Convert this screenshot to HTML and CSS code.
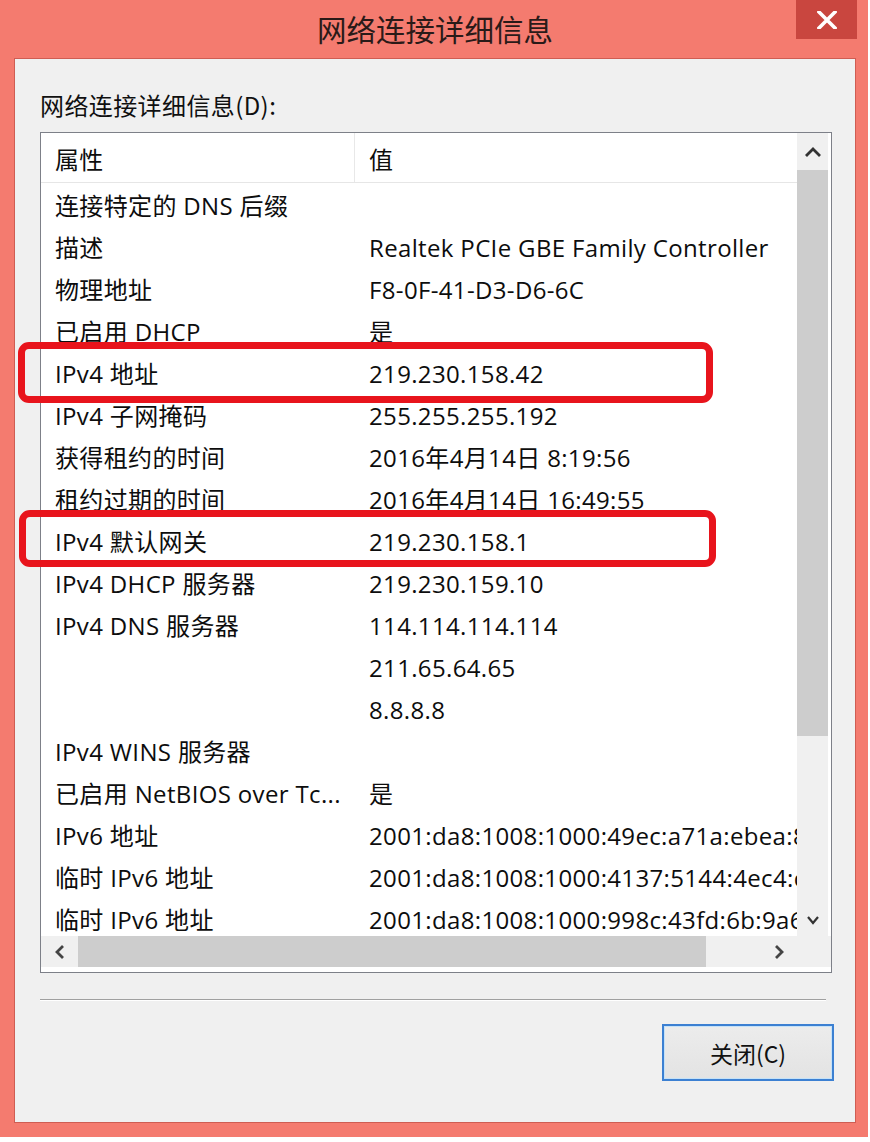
FILE: index.html
```html
<!DOCTYPE html>
<html lang="zh-CN">
<head>
<meta charset="utf-8">
<title>网络连接详细信息</title>
<link rel="stylesheet" href="styles.css">
</head>
<body>
<div class="window">
  <div class="titlebar">
    <div class="title">网络连接详细信息</div>
    <div class="close">
      <svg width="20" height="18" viewBox="0 0 20 18"><path d="M2 1 L18 17 M18 1 L2 17" stroke="#fff" stroke-width="3.6" stroke-linecap="square" fill="none"/></svg>
    </div>
  </div>
  <div class="panel">
    <div class="label">网络连接详细信息(D):</div>
    <div class="listbox">
      <div class="content">
        <div class="row head"><div class="c1">属性</div><div class="c2">值</div></div>
        <div class="rows">
          <div class="row"><div class="c1">连接特定的 DNS 后缀</div><div class="c2"></div></div>
          <div class="row"><div class="c1">描述</div><div class="c2">Realtek PCIe GBE Family Controller</div></div>
          <div class="row"><div class="c1">物理地址</div><div class="c2">F8-0F-41-D3-D6-6C</div></div>
          <div class="row"><div class="c1">已启用 DHCP</div><div class="c2">是</div></div>
          <div class="row"><div class="c1">IPv4 地址</div><div class="c2">219.230.158.42</div></div>
          <div class="row"><div class="c1">IPv4 子网掩码</div><div class="c2">255.255.255.192</div></div>
          <div class="row"><div class="c1">获得租约的时间</div><div class="c2">2016年4月14日 8:19:56</div></div>
          <div class="row"><div class="c1">租约过期的时间</div><div class="c2">2016年4月14日 16:49:55</div></div>
          <div class="row"><div class="c1">IPv4 默认网关</div><div class="c2">219.230.158.1</div></div>
          <div class="row"><div class="c1">IPv4 DHCP 服务器</div><div class="c2">219.230.159.10</div></div>
          <div class="row"><div class="c1">IPv4 DNS 服务器</div><div class="c2">114.114.114.114</div></div>
          <div class="row"><div class="c1"></div><div class="c2">211.65.64.65</div></div>
          <div class="row"><div class="c1"></div><div class="c2">8.8.8.8</div></div>
          <div class="row"><div class="c1">IPv4 WINS 服务器</div><div class="c2"></div></div>
          <div class="row"><div class="c1">已启用 NetBIOS over Tc...</div><div class="c2">是</div></div>
          <div class="row"><div class="c1">IPv6 地址</div><div class="c2">2001:da8:1008:1000:49ec:a71a:ebea:8e0b</div></div>
          <div class="row"><div class="c1">临时 IPv6 地址</div><div class="c2">2001:da8:1008:1000:4137:5144:4ec4:c1d2</div></div>
          <div class="row"><div class="c1">临时 IPv6 地址</div><div class="c2">2001:da8:1008:1000:998c:43fd:6b:9a61</div></div>
        </div>
      </div>
      <div class="vscroll">
        <div class="arrow-v"><svg width="18" height="12" viewBox="0 0 18 12"><polyline points="2,10 9,3 16,10" fill="none" stroke="#333" stroke-width="2.8"/></svg></div>
        <div class="vthumb"></div>
        <div class="vrest"></div>
        <div class="arrow-v down"><svg width="14" height="10" viewBox="0 0 14 10"><polyline points="2,2 7,8 12,2" fill="none" stroke="#333" stroke-width="2.2"/></svg></div>
      </div>
      <div class="hscroll">
        <div class="arrow-h"><svg width="12" height="16" viewBox="0 0 12 16"><polyline points="9,2 3,8 9,14" fill="none" stroke="#444" stroke-width="2.8"/></svg></div>
        <div class="hthumb"></div>
        <div class="hrest"></div>
        <div class="arrow-h"><svg width="12" height="16" viewBox="0 0 12 16"><polyline points="3,2 9,8 3,14" fill="none" stroke="#444" stroke-width="2.8"/></svg></div>
      </div>
      <div class="corner"></div>
      <div class="mark mark1"></div>
      <div class="mark mark2"></div>
    </div>
    <div class="sep"></div>
    <div class="footer"><button class="btn" type="button">关闭(C)</button></div>
  </div>
</div>
</body>
</html>
```
FILE: styles.css
```css
html, body {
  margin: 0;
  padding: 0;
  background: #ffffff;
}
body {
  font-family: "Open Sans", "Noto Sans CJK SC", sans-serif;
  color: #0d0d0d;
}
.window {
  width: 868px;
  height: 1137px;
  background: #f47b6f;
  display: flex;
  flex-direction: column;
}
.titlebar {
  height: 58px;
  display: grid;
  grid-template-columns: 1fr auto 1fr;
}
.title {
  grid-column: 2;
  font-family: "Noto Sans CJK SC", sans-serif;
  font-size: 29.5px;
  line-height: 56px;
  color: #2a1a18;
  padding-left: 2px;
}
.close {
  grid-column: 3;
  justify-self: end;
  align-self: start;
  width: 61px;
  height: 39px;
  margin-right: 11px;
  background: #c9463f;
  display: flex;
  align-items: center;
  justify-content: center;
}
.panel {
  flex: 1;
  margin: 0 12px 14px 14px;
  border: 1px solid #cf5d53;
  background: #f0f0f0;
  padding: 0 21px 0 25px;
  display: flex;
  flex-direction: column;
}
.label {
  margin-top: 31px;
  font-size: 24px;
  letter-spacing: 0.4px;
  line-height: 30px;
  color: #101010;
  font-family: "Noto Sans CJK SC", sans-serif;
}
.listbox {
  position: relative;
  margin-top: 12px;
  width: 792px;
  height: 841px;
  box-sizing: border-box;
  border: 1px solid #7d8088;
  background: #fff;
  display: grid;
  grid-template-columns: 1fr 34px;
  grid-template-rows: 1fr 36px;
}
.content {
  overflow: hidden;
  font-size: 24px;
  letter-spacing: 0.35px;
}
.row {
  display: flex;
  height: 42px;
  line-height: 41px;
  white-space: nowrap;
}
.row .c1 {
  width: 300px;
  flex: none;
  padding-left: 14px;
  overflow: hidden;
}
.row .c2 {
  padding-left: 14px;
}
.row.head {
  height: 49px;
  line-height: 49px;
  border-bottom: 1px solid #e6e6e6;
  box-sizing: content-box;
}
.row.head .c1 {
  border-right: 1px solid #e8e8e8;
  width: 299px;
  padding-top: 2px;
}
.row.head .c2 {
  padding-top: 2px;
}
.rows {
  padding-top: 2px;
}
.vscroll {
  display: flex;
  flex-direction: column;
  width: 31px;
  background: #f0f0f0;
}
.arrow-v {
  height: 37px;
  display: flex;
  align-items: center;
  justify-content: center;
}
.arrow-v.down {
  height: 32px;
}
.vthumb {
  height: 566px;
  background: #cdcdcd;
}
.vrest {
  flex: 1;
}
.hscroll {
  display: flex;
  height: 31px;
  background: #f0f0f0;
}
.arrow-h {
  width: 37px;
  display: flex;
  align-items: center;
  justify-content: center;
}
.hthumb {
  width: 628px;
  background: #cdcdcd;
}
.hrest {
  flex: 1;
}
.corner {
  width: 34px;
  height: 31px;
  background: #f0f0f0;
}
.mark {
  position: absolute;
  border: 7px solid #e8141c;
  border-radius: 11px;
  box-sizing: border-box;
}
.mark1 {
  left: -23px;
  top: 209px;
  width: 695px;
  height: 61px;
}
.mark2 {
  left: -22px;
  top: 377px;
  width: 697px;
  height: 57px;
}
.sep {
  margin-top: 26px;
  width: 786px;
  height: 1px;
  background: #a0a0a0;
  border-bottom: 1px solid #fff;
}
.footer {
  margin-top: 23px;
  display: flex;
  justify-content: flex-end;
}
.btn {
  width: 172px;
  height: 57px;
  border: 2px solid #3c80d2;
  box-shadow: inset 0 0 0 1px #c5e2f8;
  background: linear-gradient(#ececec, #e3e3e3);
  font-family: "Noto Sans CJK SC", sans-serif;
  font-size: 23px;
  color: #111;
  padding: 0;
}
```
